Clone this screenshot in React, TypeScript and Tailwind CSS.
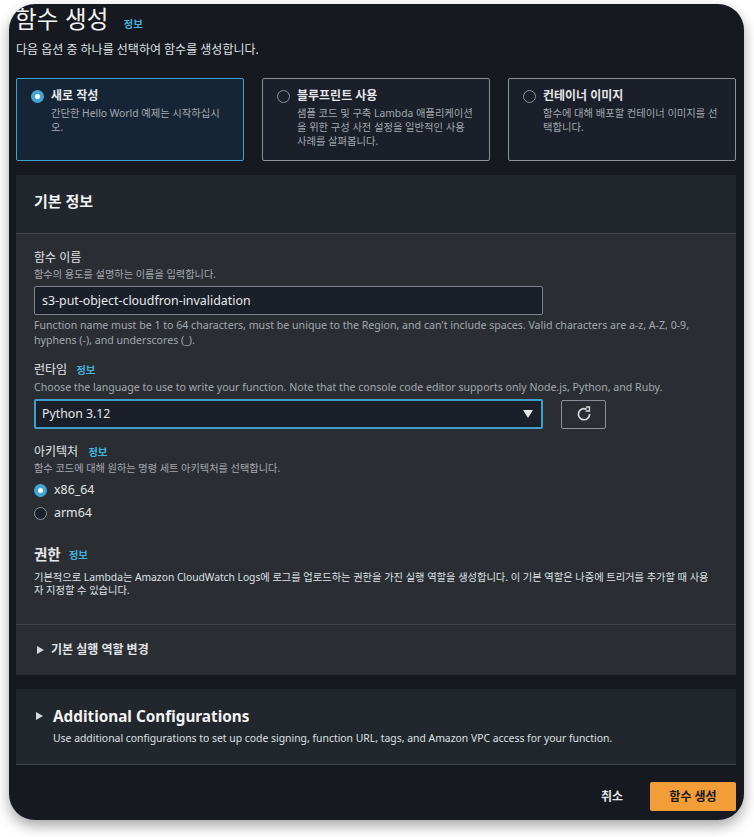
import React from "react";

function Info({ className = "" }: { className?: string }) {
  return <span className={"text-[10.5px] leading-[14px] font-bold text-[#42b4dc] " + className}>정보</span>;
}

function Radio({ checked }: { checked?: boolean }) {
  return checked ? (
    <span className="flex h-[13px] w-[13px] shrink-0 items-center justify-center rounded-full bg-[#41a6d3]">
      <span className="h-[5px] w-[5px] rounded-full bg-white" />
    </span>
  ) : (
    <span className="block h-[13px] w-[13px] shrink-0 rounded-full border border-[#8a929b] bg-[#1a202a]" />
  );
}

function Card({ title, desc, checked }: { title: string; desc: string; checked?: boolean }) {
  return (
    <div
      className={
        "flex h-[83px] w-[228px] gap-[7px] rounded-[2px] border pl-[14px] pr-[14px] pt-[9px] " +
        (checked ? "border-[#3fa1cf] bg-[#162536]" : "border-[#8a9199] bg-[#1a1f29]")
      }
    >
      <span className="mt-[2px] block shrink-0"><Radio checked={checked} /></span>
      <div className="min-w-0">
        <div className="text-[12px] font-semibold leading-[16px] text-[#e6e8ea]">{title}</div>
        <div className="mt-[2px] text-[10.3px] leading-[14px] text-[#a3a9b0]">{desc}</div>
      </div>
    </div>
  );
}

function Chevron() {
  return (
    <svg width="9" height="10" viewBox="0 0 9 10" className="shrink-0">
      <path d="M1 1 L8 5 L1 9 Z" fill="#d5dbdb" />
    </svg>
  );
}

export default function App() {
  return (
    <div className="min-h-[837px] bg-white pl-[9px] pr-[10px] pt-[4px] pb-[17px]">
      <div className="flex h-[816px] flex-col overflow-hidden rounded-[26px] bg-[#16191f] pl-[7px] pr-[8px] text-[#d5dbdb] shadow-[0_6px_14px_rgba(0,0,0,0.35)] [font-family:'Noto_Sans','Noto_Sans_CJK_KR',sans-serif]">
        <div className="flex h-[31px] items-center">
          <h1 className="-ml-[1px] text-[23.5px] font-normal leading-[31px] tracking-[0.2px] text-[#f2f3f3]">함수 생성</h1>
          <Info className="ml-[15px] mt-[8px]" />
        </div>
        <p className="mt-[7px] text-[12px] leading-[16px] text-[#dfe2e4]">다음 옵션 중 하나를 선택하여 함수를 생성합니다.</p>

        <div className="mt-[20px] flex justify-between">
          <Card checked title="새로 작성" desc="간단한 Hello World 예제는 시작하십시오." />
          <Card title="블루프린트 사용" desc="샘플 코드 및 구축 Lambda 애플리케이션을 위한 구성 사전 설정을 일반적인 사용 사례를 살펴봅니다." />
          <Card title="컨테이너 이미지" desc="함수에 대해 배포할 컨테이너 이미지를 선택합니다." />
        </div>

        <section className="mt-[14px] h-[500px] bg-[#2a2e33]">
          <div className="flex h-[59px] items-center border-b border-[#41454b] bg-[#22262d] pb-[7px] pl-[18px]">
            <h2 className="text-[15px] font-bold leading-[20px] text-[#f2f3f3]">기본 정보</h2>
          </div>
          <div className="px-[18px] pt-[16px]">
            <div className="text-[12px] leading-[16px] text-[#e3e5e7]">함수 이름</div>
            <div className="mt-[1px] text-[10.2px] leading-[14px] text-[#a3a9b0]">함수의 용도를 설명하는 이름을 입력합니다.</div>
            <div className="mt-[5px] flex h-[29px] w-[509px] items-center rounded-[2px] border border-[#7d848c] bg-[#1a1f29] pl-[7px] pt-[2px] text-[12.4px] text-[#e6e8ea]">
              s3-put-object-cloudfron-invalidation
            </div>
            <p className="mt-[3px] w-[680px] text-[10.6px] leading-[15px] text-[#a3a9b0]">
              Function name must be 1 to 64 characters, must be unique to the Region, and can't include spaces. Valid characters are a-z, A-Z, 0-9, hyphens (-), and underscores (_).
            </p>

            <div className="mt-[14px] flex items-center gap-[9px]">
              <span className="text-[12px] leading-[16px] text-[#e3e5e7]">런타임</span>
              <Info />
            </div>
            <div className="mt-[2px] text-[10.6px] leading-[14px] text-[#a3a9b0]">Choose the language to use to write your function. Note that the console code editor supports only Node.js, Python, and Ruby.</div>
            <div className="mt-[5px] flex items-center gap-[18px]">
              <div className="flex h-[30px] w-[509px] items-center justify-between rounded-[2px] border-2 border-[#3f9fcb] bg-[#1a1f29] pl-[6px] pr-[8px] text-[12.3px] text-[#e6e8ea]">
                Python 3.12
                <svg width="10" height="8" viewBox="0 0 10 8"><path d="M0 0 H10 L5 8 Z" fill="#e6e8ea" /></svg>
              </div>
              <div className="flex h-[29px] w-[45px] items-center justify-center rounded-[2px] border border-[#8a9199]">
                <svg width="16" height="16" viewBox="0 0 16 16" fill="none" stroke="#d5dbdb" strokeWidth="1.7">
                  <path d="M10.6 3.2 A5.6 5.6 0 1 0 13.6 8" />
                  <path d="M10 1 L13.4 1 L13.4 5 L9.6 5" strokeWidth="1.4" />
                </svg>
              </div>
            </div>

            <div className="mt-[15px] flex items-center gap-[10px]">
              <span className="text-[12px] leading-[16px] text-[#e3e5e7]">아키텍처</span>
              <Info />
            </div>
            <div className="mt-[1px] text-[10.2px] leading-[14px] text-[#a3a9b0]">함수 코드에 대해 원하는 명령 세트 아키텍처를 선택합니다.</div>
            <div className="mt-[7px] flex h-[16px] items-center gap-[7px] text-[12.4px] text-[#e3e5e7]"><Radio checked />x86_64</div>
            <div className="mt-[7px] flex h-[16px] items-center gap-[7px] text-[12.4px] text-[#e3e5e7]"><Radio />arm64</div>

            <div className="mt-[24px] flex items-center gap-[8px]">
              <h3 className="text-[14.5px] font-semibold leading-[18px] text-[#e6e8ea]">권한</h3>
              <Info className="mt-[1px]" />
            </div>
            <p className="mt-[8px] w-[680px] text-[10.25px] leading-[13px] text-[#dfe2e4]">
              기본적으로 Lambda는 Amazon CloudWatch Logs에 로그를 업로드하는 권한을 가진 실행 역할을 생성합니다. 이 기본 역할은 나중에 트리거를 추가할 때 사용자 지정할 수 있습니다.
            </p>
          </div>
          <div className="mt-[27px] flex h-[51px] items-center gap-[6px] border-t border-[#41454b] pl-[20px]">
            <Chevron />
            <span className="text-[12px] font-semibold leading-[16px] text-[#e3e5e7]">기본 실행 역할 변경</span>
          </div>
        </section>

        <section className="mt-[14px] flex h-[76px] gap-[9px] border-b border-[#41454b] bg-[#22262d] pl-[19px] pt-[17px]">
          <span className="mt-[5px] block"><Chevron /></span>
          <div>
            <div className="text-[15.3px] font-bold leading-[20px] text-[#f2f3f3]">Additional Configurations</div>
            <div className="mt-[5px] text-[10.4px] leading-[14px] text-[#dfe2e4]">Use additional configurations to set up code signing, function URL, tags, and Amazon VPC access for your function.</div>
          </div>
        </section>

        <div className="mt-[17px] flex items-center justify-end gap-[27px]">
          <span className="text-[12px] font-semibold text-[#e3e5e7]">취소</span>
          <div className="flex h-[29px] w-[86px] items-center justify-center rounded-[2px] bg-[#f29d38] text-[12px] font-semibold text-[#16191f]">함수 생성</div>
        </div>
      </div>
    </div>
  );
}
